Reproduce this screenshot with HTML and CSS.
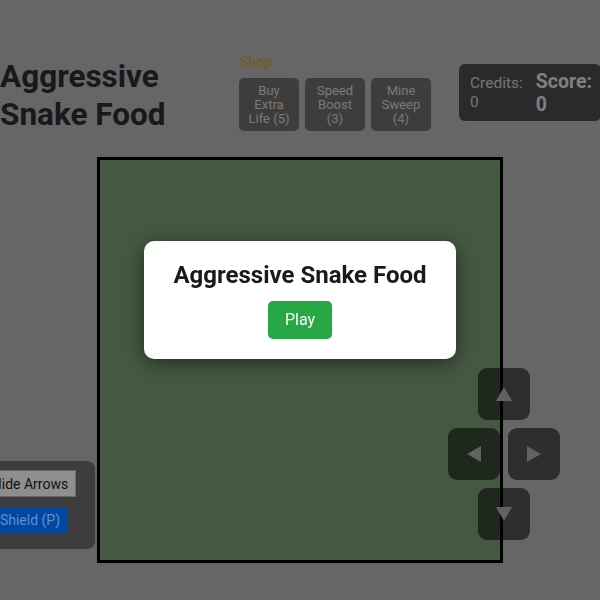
FILE: index.html
```html
<!DOCTYPE html>
<html>
<head>
<meta charset="utf-8">
<link rel="stylesheet" href="styles.css">
</head>
<body>
<header class="topbar">
  <h1 class="title">Aggressive Snake Food</h1>
  <section class="shop">
    <div class="shop-label">Shop</div>
    <div class="shop-items">
      <button class="shop-btn">Buy Extra Life (5)</button>
      <button class="shop-btn">Speed Boost (3)</button>
      <button class="shop-btn">Mine Sweep (4)</button>
    </div>
  </section>
  <div class="stats">
    <div class="credits">Credits:<br>0</div>
    <div class="score">Score:<br>0</div>
  </div>
</header>
<main class="stage">
  <div class="board"></div>
</main>
<div class="dpad">
  <button class="dkey"><svg width="18" height="16" viewBox="0 0 18 16"><polygon points="9,1 17,15 1,15" class="arrow"/></svg></button>
  <div class="drow">
    <button class="dkey"><svg width="16" height="18" viewBox="0 0 16 18"><polygon points="1,9 15,1 15,17" class="arrow"/></svg></button>
    <button class="dkey"><svg width="16" height="18" viewBox="0 0 16 18"><polygon points="15,9 1,1 1,17" class="arrow"/></svg></button>
  </div>
  <button class="dkey"><svg width="18" height="16" viewBox="0 0 18 16"><polygon points="9,15 17,1 1,1" class="arrow"/></svg></button>
</div>
<div class="overlay">
  <div class="modal">
    <h2 class="modal-title">Aggressive Snake Food</h2>
    <button class="play">Play</button>
  </div>
</div>
<div class="side-panel">
  <button class="hide-btn">Hide Arrows</button>
  <button class="shield-btn">Shield (P)</button>
</div>
</body>
</html>
```

FILE: styles.css
```css
html, body {
  margin: 0;
  padding: 0;
  width: 600px;
  height: 600px;
  overflow: hidden;
}
body {
  background: #cccccc;
  font-family: Roboto, "Liberation Sans", sans-serif;
  color: #333;
  position: relative;
}
button {
  font-family: Roboto, "Liberation Sans", sans-serif;
  border: none;
  cursor: pointer;
}
.topbar {
  display: flex;
  align-items: flex-start;
  padding-top: 54px;
}
.title {
  flex: 0 0 239px;
  width: 239px;
  margin: 4px 0 0 0;
  padding-right: 50px;
  box-sizing: border-box;
  font-size: 31.5px;
  line-height: 38px;
  font-weight: 700;
  color: #333;
}
.shop {
  flex: 0 0 191px;
  display: flex;
  flex-direction: column;
}
.shop-label {
  font-size: 14px;
  line-height: 17px;
  font-weight: 700;
  color: #dcbe50;
  margin: 0 0 7px 1px;
}
.shop-items {
  display: flex;
  gap: 6px;
}
.shop-btn {
  width: 60px;
  height: 53px;
  padding: 0 9px;
  background: #7a7a7a;
  color: #f0f0f0;
  border-radius: 5px;
  font-size: 13px;
  line-height: 14px;
}
.stats {
  margin-left: 28px;
  margin-top: 10px;
  width: 142px;
  height: 57px;
  box-sizing: border-box;
  background: #555;
  border-radius: 6px;
  display: flex;
  align-items: center;
  gap: 13px;
  padding: 0 10px 0 11px;
}
.credits {
  font-size: 15.5px;
  line-height: 19px;
  color: #e8e8e8;
}
.score {
  font-size: 19.5px;
  line-height: 23px;
  font-weight: 700;
  color: #fff;
}
.stage {
  display: flex;
  justify-content: center;
  margin-top: 23px;
}
.board {
  width: 400px;
  height: 400px;
  background: #8ab284;
  border: 3px solid #000;
}
.dpad {
  position: absolute;
  left: 448px;
  top: 368px;
  width: 112px;
  display: flex;
  flex-direction: column;
  align-items: center;
  gap: 8px;
}
.drow {
  display: flex;
  gap: 8px;
}
.dkey {
  width: 52px;
  height: 52px;
  border-radius: 9px;
  background: rgba(0, 0, 0, 0.55);
  display: flex;
  align-items: center;
  justify-content: center;
  padding: 0;
}
.arrow {
  fill: #c4c4c4;
}
.overlay {
  position: fixed;
  inset: 0;
  background: rgba(0, 0, 0, 0.5);
  display: flex;
  align-items: center;
  justify-content: center;
}
.modal {
  background: #fff;
  border-radius: 10px;
  padding: 20px 29px;
  display: flex;
  flex-direction: column;
  align-items: center;
  gap: 12px;
  box-shadow: 0 4px 20px rgba(0, 0, 0, 0.5);
}
.modal-title {
  margin: 0;
  font-size: 24px;
  line-height: 28px;
  font-weight: 700;
  color: #1a1a1a;
  white-space: nowrap;
}
.play {
  background: #28a745;
  color: #fff;
  font-size: 16px;
  line-height: 20px;
  padding: 9px 17px;
  border-radius: 5px;
}
.side-panel {
  position: absolute;
  left: -35px;
  top: 461px;
  width: 130px;
  height: 88px;
  box-sizing: border-box;
  background: #3d3d3d;
  border-radius: 8px;
  display: flex;
  flex-direction: column;
  align-items: center;
  gap: 10px;
  padding-top: 9px;
}
.hide-btn {
  height: 27px;
  padding: 0 7px;
  background: #8e8e8e;
  color: #111;
  font-size: 14px;
  border: 1px solid #6a6a6a;
}
.shield-btn {
  height: 26px;
  padding: 0 7px;
  background: #0047a3;
  color: #5e90d0;
  font-size: 14px;
  border-radius: 2px;
}
```
